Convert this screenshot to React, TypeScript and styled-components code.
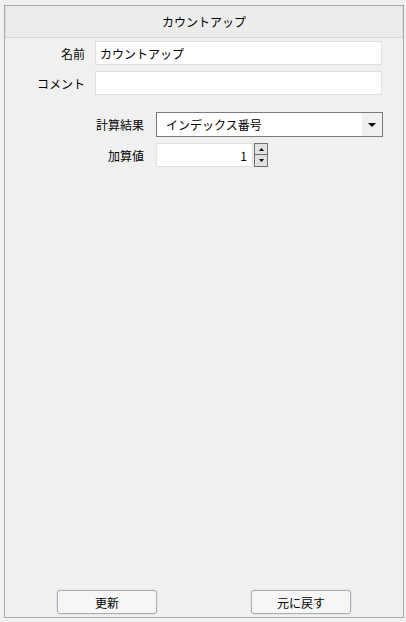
import React, { useState } from 'react';
import styled, { createGlobalStyle } from 'styled-components';

const GlobalStyle = createGlobalStyle`
  html, body {
    margin: 0;
    padding: 0;
    background: #f0f0f0;
  }
  body {
    font-family: "Noto Sans CJK JP", "Noto Sans", sans-serif;
    font-size: 12px;
    color: #000;
  }
`;

const App: React.FC = () => {
  const [name, setName] = useState('カウントアップ');
  const [comment, setComment] = useState('');
  const [step, setStep] = useState(1);

  return (
    <>
      <GlobalStyle />
      <Panel>
        <Header>カウントアップ</Header>
        <Body>
          <Basic>
            <Label>名前</Label>
            <TextBox value={name} onChange={(e) => setName(e.target.value)} />
            <Label>コメント</Label>
            <TextBox value={comment} onChange={(e) => setComment(e.target.value)} />
          </Basic>
          <Detail>
            <Label>計算結果</Label>
            <Combo>
              <ComboText>インデックス番号</ComboText>
              <ComboArrow>
                <svg width="8" height="4" viewBox="0 0 8 4">
                  <path d="M0 0h8L4 4z" fill="#000" />
                </svg>
              </ComboArrow>
            </Combo>
            <Label>加算値</Label>
            <Spin>
              <NumberBox>{step}</NumberBox>
              <SpinButtons>
                <SpinButton onClick={() => setStep(step + 1)}>
                  <svg width="5" height="3" viewBox="0 0 5 3">
                    <path d="M0 3h5L2.5 0z" fill="#000" />
                  </svg>
                </SpinButton>
                <SpinButton onClick={() => setStep(step - 1)}>
                  <svg width="5" height="3" viewBox="0 0 5 3">
                    <path d="M0 0h5L2.5 3z" fill="#000" />
                  </svg>
                </SpinButton>
              </SpinButtons>
            </Spin>
          </Detail>
        </Body>
        <Footer>
          <Button>更新</Button>
          <Button>元に戻す</Button>
        </Footer>
      </Panel>
    </>
  );
};

const Panel = styled.div`
  box-sizing: border-box;
  margin: 5px 0 0 4px;
  width: 400px;
  height: 613px;
  border: 1px solid #a9a9a9;
  background: #f0f0f0;
  display: flex;
  flex-direction: column;
`;

const Header = styled.div`
  height: 31px;
  border-bottom: 1px solid #d9d9d9;
  border-left: 1px solid #dcdcdc;
  border-right: 1px solid #dcdcdc;
  background: #ececec;
  display: flex;
  align-items: center;
  justify-content: center;
  line-height: 1;
`;

const Body = styled.div`
  flex: 1;
  display: flex;
  flex-direction: column;
`;

const Basic = styled.div`
  display: grid;
  grid-template-columns: 80px 287px;
  grid-auto-rows: 24px;
  column-gap: 10px;
  row-gap: 6px;
  margin-top: 3px;
`;

const Detail = styled.div`
  display: grid;
  grid-template-columns: 139px auto;
  grid-auto-rows: 24px;
  column-gap: 12px;
  row-gap: 7px;
  margin-top: 17px;
  justify-content: start;
`;

const Label = styled.div`
  display: flex;
  align-items: center;
  justify-content: flex-end;
  white-space: nowrap;
`;

const TextBox = styled.input`
  box-sizing: border-box;
  height: 24px;
  width: 100%;
  margin: 0;
  padding: 0 4px;
  border: 1px solid #e1e1e1;
  background: #fff;
  font: inherit;
  color: #000;
  outline: none;
`;

const Combo = styled.div`
  box-sizing: border-box;
  width: 227px;
  height: 25px;
  border: 1px solid #7a7a7a;
  background: #fff;
  display: flex;
  align-items: stretch;
`;

const ComboText = styled.div`
  flex: 1;
  display: flex;
  align-items: center;
  padding-left: 9px;
`;

const ComboArrow = styled.div`
  width: 20px;
  background: #f0f0f0;
  display: flex;
  align-items: center;
  justify-content: center;
`;

const Spin = styled.div`
  display: flex;
  height: 24px;
`;

const NumberBox = styled.div`
  box-sizing: border-box;
  width: 97px;
  height: 24px;
  border: 1px solid #e1e1e1;
  background: #fff;
  display: flex;
  align-items: center;
  justify-content: flex-end;
  padding-right: 5px;
`;

const SpinButtons = styled.div`
  display: flex;
  flex-direction: column;
  margin-left: 1px;
`;

const SpinButton = styled.button`
  box-sizing: border-box;
  width: 14px;
  height: 12px;
  margin: 0;
  padding: 0;
  border: 1px solid #707070;
  background: #e1e1e1;
  display: flex;
  align-items: center;
  justify-content: center;
  & + & {
    margin-top: -1px;
    height: 13px;
  }
`;

const Footer = styled.div`
  display: flex;
  gap: 94px;
  padding: 0 0 3px 52px;
`;

const Button = styled.button`
  box-sizing: border-box;
  width: 100px;
  height: 24px;
  margin: 0;
  border: 1px solid #adadad;
  border-radius: 3px;
  background: #f6f6f6;
  box-shadow: 0 0 0 1px #dfe8f2;
  font: inherit;
  color: #000;
`;

export default App;
